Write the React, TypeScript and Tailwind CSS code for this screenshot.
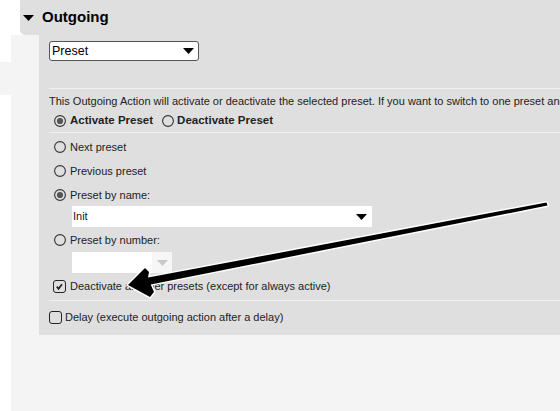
import React from "react";

const Radio = ({ checked }: { checked?: boolean }) => (
  <svg width="12" height="12" viewBox="0 0 12 12" className="shrink-0">
    <circle cx="6" cy="6" r="5.4" fill="none" stroke="#333" strokeWidth="1.1" />
    {checked && <circle cx="6" cy="6" r="3.1" fill="#555" />}
  </svg>
);

const Checkbox = ({ checked }: { checked?: boolean }) => (
  <svg width="13" height="13" viewBox="0 0 13 13" className="shrink-0">
    <rect x="0.5" y="0.5" width="12" height="12" rx="2.5" fill="none" stroke="#222" />
    {checked && (
      <path d="M3.8 6.6 L5.6 8.8 L9 4.2" fill="none" stroke="#222" strokeWidth="1.7" />
    )}
  </svg>
);

const Caret = ({ color = "#000" }: { color?: string }) => (
  <svg width="11" height="6" viewBox="0 0 11 6" className="shrink-0">
    <path d="M0 0 H11 L5.5 6 Z" fill={color} />
  </svg>
);

const Option = ({ label, checked }: { label: string; checked?: boolean }) => (
  <div className="flex h-4 items-center gap-[4px] pl-[5px]">
    <Radio checked={checked} />
    <span>{label}</span>
  </div>
);

export default function App() {
  return (
    <div className="relative flex h-[411px] w-[560px] overflow-hidden bg-white font-['Liberation_Sans',Arial,sans-serif] text-[11px] text-[#222]">
      {/* left rail */}
      <div className="flex w-[11px] shrink-0 flex-col">
        <div className="h-[62px]" />
        <div className="h-[33px] bg-[#f4f4f4]" />
      </div>

      <div className="flex min-w-0 flex-1 flex-col">
        <div className="pl-[9px]">
          <div className="flex h-[35px] items-center gap-[8px] rounded-bl-[5px] bg-[#dfdfdf] pl-[3px]">
            <Caret />
            <span className="text-[15px] font-bold text-black">Outgoing</span>
          </div>
        </div>

        <div className="flex-1 bg-[#f4f4f4] pl-[28px]">
          <div className="flex h-[300px] flex-col overflow-hidden bg-[#dfdfdf] pl-[10px] pt-[6px]">
            <div className="flex h-[20px] w-[150px] items-center justify-between rounded-[3px] border border-[#555] bg-white pl-[2px] pr-[4px] text-[12.5px] text-black">
              <span>Preset</span>
              <Caret />
            </div>

            <div className="mt-[27px] h-px bg-[#efefef]" />
            <div className="flex h-[24px] items-center whitespace-nowrap">
              This Outgoing Action will activate or deactivate the selected preset. If you want to switch to one preset and
            </div>

            <div className="flex h-4 items-center gap-[9px] pl-[5px] text-[11.5px] font-bold">
              <div className="flex items-center gap-[4px]">
                <Radio checked />
                <span>Activate Preset</span>
              </div>
              <div className="flex items-center gap-[3px]">
                <Radio />
                <span>Deactivate Preset</span>
              </div>
            </div>

            <div className="mt-[3px] h-px bg-[#efefef]" />

            <div className="mt-[6px] flex flex-col gap-[8px]">
              <Option label="Next preset" />
              <Option label="Previous preset" />
              <Option label="Preset by name:" checked />
            </div>

            <div className="ml-[23px] mt-[3px] flex h-[21px] w-[300px] items-center justify-between bg-white pl-[1px] pr-[5px]">
              <span>Init</span>
              <Caret />
            </div>

            <div className="mt-[5px]">
              <Option label="Preset by number:" />
            </div>

            <div className="ml-[23px] mt-[4px] flex h-[21px] w-[100px] bg-white">
              <div className="flex-1" />
              <div className="flex w-[20px] items-center justify-center bg-[#f6f6f6]">
                <Caret color="#c9c9c9" />
              </div>
            </div>

            <div className="mt-[5px] flex h-4 items-center gap-[4px] pl-[4px]">
              <Checkbox checked />
              <span>Deactivate all other presets (except for always active)</span>
            </div>

            <div className="mt-[6px] h-px bg-[#efefef]" />

            <div className="mt-[8px] flex h-4 items-center gap-[3px]">
              <Checkbox />
              <span>Delay (execute outgoing action after a delay)</span>
            </div>
          </div>
        </div>
      </div>

      {/* annotation arrow drawn over the page */}
      <svg
        className="pointer-events-none absolute left-0 top-0"
        width="560"
        height="411"
        viewBox="0 0 560 411"
      >
        <polygon
          points="128,285 145,268 149,272 148,277.6 546.5,202.4 547.5,205.6 150.7,284.4 154,292 150,297"
          fill="#000"
          stroke="#fff"
          strokeWidth="3"
          strokeLinejoin="round"
          paintOrder="stroke"
        />
      </svg>
    </div>
  );
}
